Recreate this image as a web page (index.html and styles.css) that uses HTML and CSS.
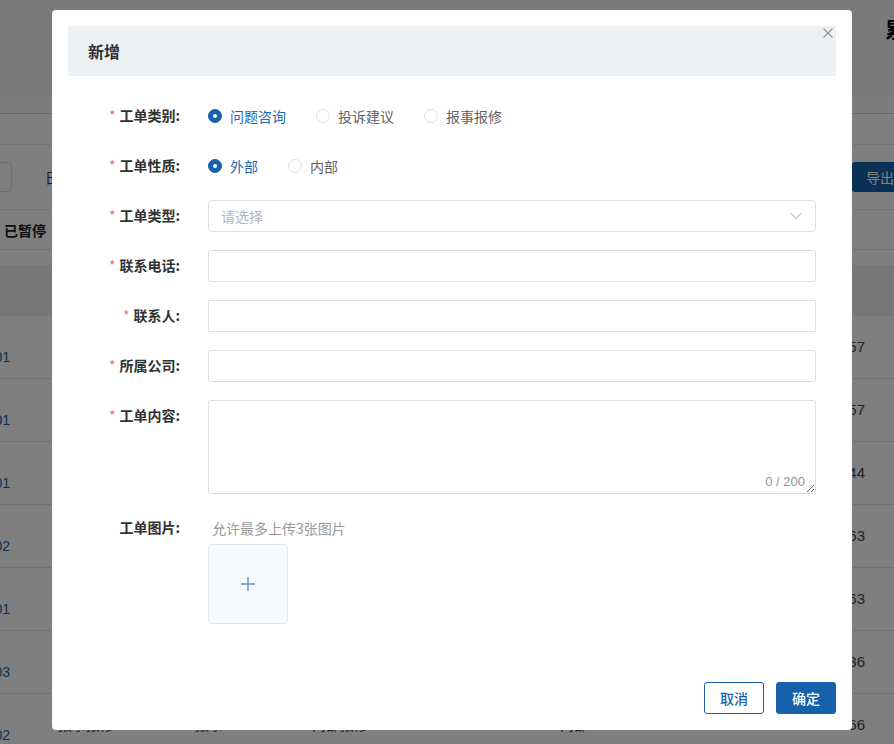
FILE: index.html
```html
<!DOCTYPE html>
<html lang="zh-CN">
<head>
    <meta charset="UTF-8">
    <meta name="viewport" content="width=device-width, initial-scale=1.0">
    <title>工单管理</title>
    <link rel="stylesheet" href="styles.css">
</head>
<body>
    <div class="page">
        <div class="topbar"><span class="page-title">累计工单统计</span></div>
        <div class="subbar"></div>
        <div class="tabs"></div>
        <div class="filters">
            <div class="filter-input"></div>
            <span class="filter-text">日期范围</span>
            <button class="export-btn">导出</button>
        </div>
        <div class="status-tabs"><span class="status-tab">已暂停</span></div>
        <div class="table">
            <div class="table-head"></div>
            <div class="table-row"><span class="cell-no">GD20240001</span><span class="cell">问题咨询</span><span class="cell">咨询</span><span class="cell">物业服务</span><span class="cell">外部</span><span class="cell">15212345678</span><span class="cell-end">15212346657</span></div>
            <div class="table-row"><span class="cell-no">GD20240001</span><span class="cell">问题咨询</span><span class="cell">咨询</span><span class="cell">物业服务</span><span class="cell">外部</span><span class="cell">15212345678</span><span class="cell-end">15212346657</span></div>
            <div class="table-row"><span class="cell-no">GD20240001</span><span class="cell">投诉建议</span><span class="cell">投诉</span><span class="cell">环境卫生</span><span class="cell">外部</span><span class="cell">15212345678</span><span class="cell-end">15212346644</span></div>
            <div class="table-row"><span class="cell-no">GD20240002</span><span class="cell">报事报修</span><span class="cell">报修</span><span class="cell">水电维修</span><span class="cell">内部</span><span class="cell">15212345678</span><span class="cell-end">15212346663</span></div>
            <div class="table-row"><span class="cell-no">GD20240001</span><span class="cell">报事报修</span><span class="cell">报修</span><span class="cell">水电维修</span><span class="cell">内部</span><span class="cell">15212345678</span><span class="cell-end">15212346663</span></div>
            <div class="table-row"><span class="cell-no">GD20240003</span><span class="cell">问题咨询</span><span class="cell">咨询</span><span class="cell">物业服务</span><span class="cell">外部</span><span class="cell">15212345678</span><span class="cell-end">15212346636</span></div>
            <div class="table-row"><span class="cell-no">GD20240002</span><span class="cell">报事报修</span><span class="cell">报事</span><span class="cell">内部报修</span><span class="cell">内部</span><span class="cell">15212345678</span><span class="cell-end">15212346666</span></div>
        </div>
    </div>

    <div class="overlay"></div>

    <div class="dialog">
        <div class="dialog-header"><span class="dialog-title">新增</span></div>
        <button class="dialog-close" aria-label="关闭">
            <svg width="10" height="10" viewBox="0 0 10 10"><path d="M0.5 0.5 L9.5 9.5 M9.5 0.5 L0.5 9.5" stroke="#909399" stroke-width="1.1" fill="none"/></svg>
        </button>

        <form class="form">
            <div class="form-item">
                <label class="form-label required">工单类别:</label>
                <div class="radio-group">
                    <label class="radio checked"><span class="radio-dot"></span><span class="radio-text">问题咨询</span></label>
                    <label class="radio"><span class="radio-dot"></span><span class="radio-text">投诉建议</span></label>
                    <label class="radio"><span class="radio-dot"></span><span class="radio-text">报事报修</span></label>
                </div>
            </div>
            <div class="form-item">
                <label class="form-label required">工单性质:</label>
                <div class="radio-group">
                    <label class="radio checked"><span class="radio-dot"></span><span class="radio-text">外部</span></label>
                    <label class="radio"><span class="radio-dot"></span><span class="radio-text">内部</span></label>
                </div>
            </div>
            <div class="form-item">
                <label class="form-label required">工单类型:</label>
                <div class="select">
                    <span class="placeholder">请选择</span>
                    <svg width="12" height="8" viewBox="0 0 12 8"><path d="M1 1.5 L6 6.5 L11 1.5" stroke="#c0c4cc" stroke-width="1.1" fill="none"/></svg>
                </div>
            </div>
            <div class="form-item">
                <label class="form-label required">联系电话:</label>
                <input class="input" type="text">
            </div>
            <div class="form-item">
                <label class="form-label required">联系人:</label>
                <input class="input" type="text">
            </div>
            <div class="form-item">
                <label class="form-label required">所属公司:</label>
                <input class="input" type="text">
            </div>
            <div class="form-item">
                <label class="form-label required">工单内容:</label>
                <div class="textarea-wrap">
                    <textarea class="textarea"></textarea>
                    <span class="count">0 / 200</span>
                </div>
            </div>
            <div class="form-item">
                <label class="form-label">工单图片:</label>
                <div class="upload">
                    <div class="upload-tip">允许最多上传3张图片</div>
                    <div class="upload-box">
                        <svg width="14" height="14" viewBox="0 0 14 14"><path d="M7 0 V14 M0 7 H14" stroke="#5b8fd0" stroke-width="1.4" fill="none"/></svg>
                    </div>
                </div>
            </div>
        </form>

        <div class="dialog-footer">
            <button class="btn btn-plain">取消</button>
            <button class="btn btn-primary">确定</button>
        </div>
    </div>
</body>
</html>
```

FILE: styles.css
```css
body {
    margin: 0;
    font-family: "Noto Sans CJK SC", "Liberation Sans", sans-serif;
    font-size: 14px;
    color: #303133;
    overflow: hidden;
}

/* page behind the dialog */
.page {
    width: 894px;
    height: 744px;
    background: #fff;
    overflow: hidden;
}
.topbar {
    height: 97px;
    background: #f3f5f7;
    padding-left: 885px;
    box-sizing: border-box;
    white-space: nowrap;
    overflow: hidden;
}
.page-title {
    display: inline-block;
    margin-top: 14px;
    font-size: 21px;
    line-height: 28px;
    font-weight: bold;
    color: #000;
}
.subbar {
    height: 16px;
    background: #fafafa;
    border-bottom: 1px solid #d6d6d6;
}
.tabs {
    height: 30px;
    border-bottom: 1px solid #ebebeb;
}
.filters {
    display: flex;
    align-items: center;
    height: 64px;
    border-bottom: 1px solid #ebebeb;
}
.filter-input {
    width: 112px;
    height: 30px;
    margin-left: -100px;
    border: 1px solid #dcdfe6;
    border-radius: 4px;
    box-sizing: border-box;
}
.filter-text {
    margin-left: 33px;
    color: #333;
    white-space: nowrap;
}
.export-btn {
    margin-left: auto;
    margin-right: -30px;
    width: 72px;
    height: 30px;
    border: none;
    border-radius: 3px;
    background: #1661ab;
    color: #fff;
    font-family: inherit;
    font-size: 14px;
    text-align: left;
    padding-left: 14px;
}
.status-tabs {
    height: 39px;
    display: flex;
    align-items: center;
    border-bottom: 1px solid #e4e4e4;
}
.status-tab {
    margin-left: 4px;
    font-weight: bold;
    color: #222;
}
.table {
    margin-top: 15px;
    font-family: "Liberation Sans", "Noto Sans CJK SC", sans-serif;
}
.table-head {
    height: 51px;
    background: #eceef3;
}
.table-row {
    display: grid;
    grid-template-columns: 58px 137px 117px 248px 92px 110px 1fr;
    align-items: center;
    height: 62px;
    border-bottom: 1px solid #e2e2e2;
    color: #444;
    white-space: nowrap;
    line-height: 20px;
}
.cell-no {
    justify-self: end;
    margin-right: 48px;
    padding-top: 20px;
    color: #1661ab;
}
.cell-end {
    justify-self: end;
    margin-right: 29px;
    font-size: 15px;
}

.overlay {
    position: fixed;
    inset: 0;
    background: rgba(0, 0, 0, 0.5);
}

/* dialog */
.dialog {
    position: fixed;
    top: 10px;
    left: 52px;
    width: 800px;
    height: 720px;
    padding: 16px;
    box-sizing: border-box;
    background: #fff;
    border-radius: 4px;
    display: flex;
    flex-direction: column;
}
.dialog-header {
    height: 50px;
    flex-shrink: 0;
    background: #eef1f4;
    display: flex;
    align-items: center;
    padding-left: 20px;
}
.dialog-title {
    font-size: 16px;
    font-weight: bold;
    color: #303133;
}
.dialog-close {
    position: absolute;
    top: 18px;
    right: 19px;
    width: 10px;
    height: 10px;
    padding: 0;
    border: none;
    background: none;
    display: flex;
}

.form {
    margin: 0;
    padding: 24px 20px 0 0;
}
.form-item {
    display: grid;
    grid-template-columns: 140px 1fr;
    margin-bottom: 18px;
}
.form-label {
    text-align: right;
    padding-right: 28px;
    line-height: 30px;
    font-weight: bold;
    color: #303133;
    white-space: nowrap;
}
.form-label.required::before {
    content: "*";
    color: #f56c6c;
    margin-right: 4px;
    font-weight: normal;
}

.radio-group {
    display: flex;
    align-items: center;
    height: 32px;
}
.radio {
    display: flex;
    align-items: center;
    margin-right: 30px;
    color: #606266;
    line-height: 30px;
}
.radio-dot {
    width: 14px;
    height: 14px;
    border: 1px solid #dcdfe6;
    border-radius: 50%;
    box-sizing: border-box;
    position: relative;
}
.radio-text {
    padding-left: 8px;
}
.radio.checked .radio-dot {
    border-color: #1661ab;
    background: #1661ab;
}
.radio.checked .radio-dot::after {
    content: "";
    position: absolute;
    left: 50%;
    top: 50%;
    width: 4px;
    height: 4px;
    margin: -2px 0 0 -2px;
    border-radius: 50%;
    background: #fff;
}
.radio.checked .radio-text {
    color: #1f67b1;
}

.select,
.input {
    width: 100%;
    height: 32px;
    border: 1px solid #dcdfe6;
    border-radius: 4px;
    box-sizing: border-box;
}
.input {
    border-radius: 2px;
    padding: 0 12px;
    font-family: inherit;
    font-size: 14px;
    outline: none;
}
.select {
    display: flex;
    align-items: center;
    justify-content: space-between;
    padding: 0 13px 0 12px;
}
.placeholder {
    color: #b3b6bd;
}

.textarea-wrap {
    position: relative;
    height: 94px;
}
.textarea {
    display: block;
    width: 100%;
    height: 94px;
    border: 1px solid #dcdfe6;
    border-radius: 2px;
    box-sizing: border-box;
    padding: 5px 12px;
    font-family: inherit;
    font-size: 14px;
    outline: none;
}
.count {
    position: absolute;
    right: 11px;
    bottom: 5px;
    font-family: "Liberation Sans", sans-serif;
    font-size: 13px;
    line-height: 14px;
    color: #909399;
    background: #fff;
}

.upload-tip {
    line-height: 32px;
    padding-left: 4px;
    color: #999;
}
.upload-box {
    width: 80px;
    height: 80px;
    box-sizing: border-box;
    border: 1px solid #e4e7ed;
    border-radius: 3px;
    background: #f7fafd;
    display: flex;
    align-items: center;
    justify-content: center;
}

.dialog-footer {
    margin-top: auto;
    display: flex;
    justify-content: flex-end;
    gap: 12px;
}
.btn {
    width: 60px;
    height: 32px;
    border-radius: 3px;
    font-family: inherit;
    font-size: 14px;
    font-weight: 500;
    cursor: pointer;
    border: 1px solid #1661ab;
}
.btn-plain {
    background: #fff;
    color: #1661ab;
}
.btn-primary {
    background: #1661ab;
    color: #fff;
}
```
